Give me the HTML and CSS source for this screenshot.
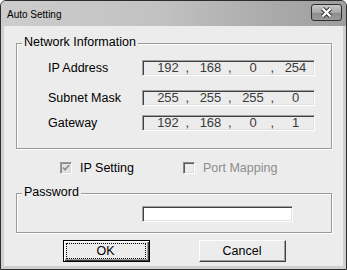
FILE: index.html
```html
<!DOCTYPE html>
<html>
<head>
<meta charset="utf-8">
<link rel="stylesheet" href="styles.css">
</head>
<body>
<div class="window">
  <div class="titlebar">
    <span class="title">Auto Setting</span>
    <span class="close">
      <svg width="29" height="15" viewBox="0 0 29 15">
        <path d="M10.5 3.5 L18.5 11.5 M18.5 3.5 L10.5 11.5" stroke="#2f2f2f" stroke-width="4.4" fill="none"/>
        <path d="M10.5 3.5 L18.5 11.5 M18.5 3.5 L10.5 11.5" stroke="#ffffff" stroke-width="2.4" fill="none"/>
      </svg>
    </span>
  </div>
  <div class="content">
    <div class="group net">
      <div class="legend">Network Information</div>
      <div class="row first">
        <span class="label">IP Address</span>
        <div class="field"><span class="oct">192</span><span class="sep">,</span><span class="oct">168</span><span class="sep">,</span><span class="oct">0</span><span class="sep">,</span><span class="oct">254</span></div>
      </div>
      <div class="row second">
        <span class="label">Subnet Mask</span>
        <div class="field"><span class="oct">255</span><span class="sep">,</span><span class="oct">255</span><span class="sep">,</span><span class="oct">255</span><span class="sep">,</span><span class="oct">0</span></div>
      </div>
      <div class="row third">
        <span class="label">Gateway</span>
        <div class="field"><span class="oct">192</span><span class="sep">,</span><span class="oct">168</span><span class="sep">,</span><span class="oct">0</span><span class="sep">,</span><span class="oct">1</span></div>
      </div>
    </div>
    <div class="checks">
      <div class="check ip-check">
        <span class="box checked">
          <svg width="10" height="10" viewBox="0 0 10 10"><path d="M2 4.5 L4 6.8 L8 2.2" stroke="#8c8c8c" stroke-width="1.7" fill="none"/></svg>
        </span>
        <span class="text">IP Setting</span>
      </div>
      <div class="check disabled">
        <span class="box"></span>
        <span class="text">Port Mapping</span>
      </div>
    </div>
    <div class="group pw">
      <div class="legend">Password</div>
      <div class="pw-input"></div>
    </div>
    <div class="buttons">
      <div class="btn default"><span class="focus">OK</span></div>
      <div class="btn">Cancel</div>
    </div>
  </div>
</div>
</body>
</html>
```
FILE: styles.css
```css
html, body {
  margin: 0;
  padding: 0;
  background: #ffffff;
}
body {
  font-family: "Liberation Sans", Arial, sans-serif;
  font-size: 12.5px;
  color: #000;
}
.window {
  width: 347px;
  height: 270px;
  box-sizing: border-box;
  border: 1px solid #2c2c2c;
  border-radius: 6px 6px 0 0;
  background: #cfcfcf;
  display: flex;
  flex-direction: column;
  overflow: hidden;
}
.titlebar {
  height: 25px;
  flex: none;
  display: flex;
  justify-content: space-between;
  align-items: flex-start;
  background: linear-gradient(to right, #cdcdcd 0%, #c2c2c2 45%, #a9a9a9 80%, #9e9e9e 100%);
}
.title {
  font-size: 10px;
  margin: 8px 0 0 6px;
  line-height: 12px;
  color: #000;
}
.close {
  width: 29px;
  height: 15px;
  margin: 3px 4px 0 0;
  border: 1px solid #2f2f2f;
  border-radius: 3px;
  background: linear-gradient(#c8c8c8, #a8a8a8 50%, #8c8c8c 51%, #9a9a9a);
  display: flex;
}
.content {
  flex: 1;
  margin: 0 3px 3px 3px;
  background: #ececec;
  padding-top: 17px;
  display: flex;
  flex-direction: column;
}
.group {
  width: 316px;
  box-sizing: border-box;
  margin-left: 12px;
  border: 1px solid #9b9b9b;
  box-shadow: inset 1px 1px 0 #ffffff, 1px 1px 0 #ffffff;
}
.legend {
  width: fit-content;
  margin: -10px 0 0 5px;
  padding: 0 2px;
  line-height: 16px;
  background: #ececec;
}
.net {
  padding-bottom: 17px;
}
.row {
  display: flex;
  align-items: center;
  height: 16px;
  padding-left: 31px;
}
.row.first { margin-top: 10px; }
.row.second { margin-top: 14px; }
.row.third { margin-top: 9px; }
.label {
  width: 94px;
  flex: none;
}
.field {
  width: 173px;
  height: 16px;
  box-sizing: border-box;
  border: 1px solid;
  border-color: #a0a0a0 #ffffff #ffffff #a0a0a0;
  box-shadow: inset 1px 1px 0 #404040, inset -1px -1px 0 #e0e0e0;
  background: #ececec;
  padding-left: 10px;
  display: flex;
  align-items: center;
  font-family: "Liberation Sans Narrow", "Liberation Sans", Arial, sans-serif;
  font-size: 13px;
  color: #3a3a3a;
  line-height: 14px;
}
.oct {
  width: 30px;
  text-align: center;
  flex: none;
}
.sep {
  width: 12.5px;
  box-sizing: border-box;
  padding-right: 4px;
  text-align: center;
  flex: none;
}
.checks {
  display: flex;
  margin-top: 13px;
  padding-left: 56px;
  height: 12px;
}
.check {
  display: flex;
  align-items: center;
  gap: 8px;
  height: 12px;
}
.ip-check {
  width: 123px;
}
.box {
  width: 12px;
  height: 12px;
  box-sizing: border-box;
  border: 1px solid;
  border-color: #8a8a8a #ffffff #ffffff #8a8a8a;
  box-shadow: inset 1px 1px 0 #5a5a5a, inset -1px -1px 0 #dcdcdc;
  background: #ececec;
  display: flex;
  align-items: center;
  justify-content: center;
  flex: none;
}
.box.checked {
  border-color: #9a9a9a #ffffff #ffffff #9a9a9a;
  box-shadow: inset 1px 1px 0 #8a8a8a, inset -1px -1px 0 #d8d8d8;
  background: #e4e4e4;
}
.check.disabled .text {
  color: #8d8d8d;
}
.pw {
  margin-top: 19px;
  padding: 0 0 10px 0;
}
.pw-input {
  width: 151px;
  height: 16px;
  box-sizing: border-box;
  margin: 6px 0 0 125px;
  background: #ffffff;
  border: 1px solid;
  border-color: #a0a0a0 #ffffff #ffffff #a0a0a0;
  box-shadow: inset 1px 1px 0 #404040, inset -1px -1px 0 #e0e0e0;
}
.buttons {
  display: flex;
  justify-content: center;
  gap: 49px;
  margin-top: 7px;
  padding-left: 1px;
}
.btn {
  width: 87px;
  height: 22px;
  box-sizing: border-box;
  border: 1px solid;
  border-color: #ffffff #404040 #404040 #ffffff;
  box-shadow: inset -1px -1px 0 #a0a0a0;
  background: #ececec;
  display: flex;
  align-items: center;
  justify-content: center;
  line-height: 14px;
}
.btn.default {
  border: 1px solid #000000;
  box-shadow: inset 1px 1px 0 #ffffff, inset -1px -1px 0 #404040, inset -2px -2px 0 #a0a0a0;
  padding: 2px 3px 2px 2px;
}
.focus {
  flex: 1;
  align-self: stretch;
  border: 1px dotted #000000;
  display: flex;
  align-items: center;
  justify-content: center;
}
```
